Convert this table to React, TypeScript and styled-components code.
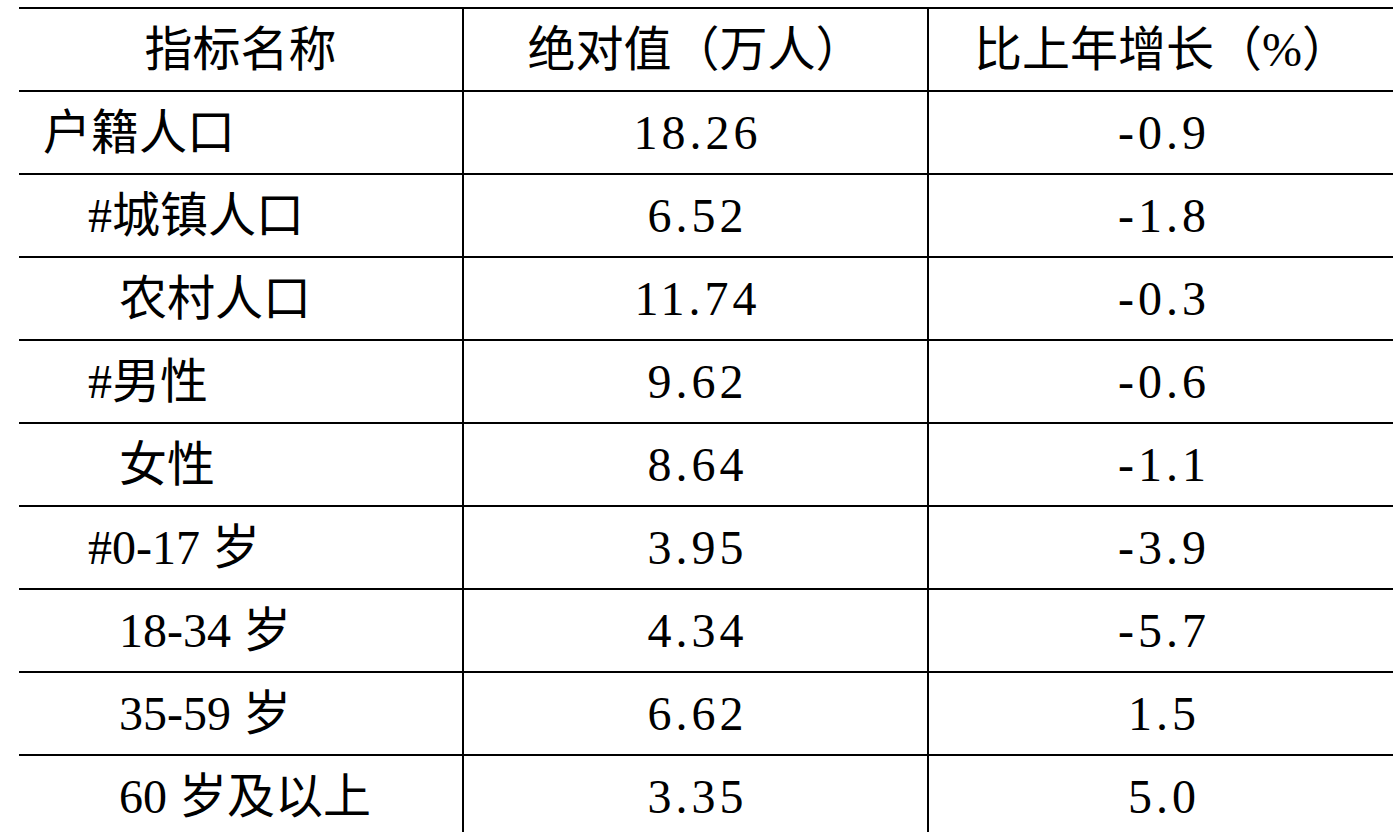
import React from "react";
import styled, { createGlobalStyle } from "styled-components";

const Global = createGlobalStyle`
  html, body {
    margin: 0;
    padding: 0;
    background: #ffffff;
    overflow: hidden;
  }
  body {
    color: #000;
  }
`;

const Page = styled.div`
  padding: 7px 0 0 19px;
  width: 1420px;
`;

const Table = styled.table`
  border-collapse: collapse;
  table-layout: fixed;
  width: 1376px;
`;

const Col = styled.col<{ $w: number }>`
  width: ${(p) => p.$w}px;
`;

const Row = styled.tr`
  height: 83px;
`;

const Cell = styled.td<{ $first?: boolean; $indent?: number; $center?: boolean }>`
  border-top: 2px solid #000;
  border-left: ${(p) => (p.$first ? "none" : "2px solid #000")};
  padding: 0 0 0 ${(p) => (p.$indent ?? 0)}px;
  text-align: ${(p) => (p.$center ? "center" : "left")};
  vertical-align: middle;
  white-space: nowrap;
  font-family: "Liberation Serif", "Noto Sans CJK SC", serif;
  font-size: 48px;
  font-weight: 400;
  line-height: 1;
`;

const HeadCell = styled(Cell).attrs({ as: "th" })``;

const Num = styled.span`
  letter-spacing: 4px;
  margin-right: -4px;
`;

type RowData = { name: string; indent: number; value: string; growth: string };

const rows: RowData[] = [
  { name: "户籍人口", indent: 24, value: "18.26", growth: "-0.9" },
  { name: "#城镇人口", indent: 69, value: "6.52", growth: "-1.8" },
  { name: "农村人口", indent: 100, value: "11.74", growth: "-0.3" },
  { name: "#男性", indent: 69, value: "9.62", growth: "-0.6" },
  { name: "女性", indent: 100, value: "8.64", growth: "-1.1" },
  { name: "#0-17 岁", indent: 69, value: "3.95", growth: "-3.9" },
  { name: "18-34 岁", indent: 100, value: "4.34", growth: "-5.7" },
  { name: "35-59 岁", indent: 100, value: "6.62", growth: "1.5" },
  { name: "60 岁及以上", indent: 100, value: "3.35", growth: "5.0" },
];

export default function App() {
  return (
    <>
      <Global />
      <Page>
        <Table>
          <colgroup>
            <Col $w={444} />
            <Col $w={465} />
            <Col $w={467} />
          </colgroup>
          <thead>
            <Row>
              <HeadCell $first $center>指标名称</HeadCell>
              <HeadCell $center>绝对值（万人）</HeadCell>
              <HeadCell $center>比上年增长（%）</HeadCell>
            </Row>
          </thead>
          <tbody>
            {rows.map((r) => (
              <Row key={r.name}>
                <Cell $first $indent={r.indent}>{r.name}</Cell>
                <Cell $center><Num>{r.value}</Num></Cell>
                <Cell $center><Num>{r.growth}</Num></Cell>
              </Row>
            ))}
          </tbody>
        </Table>
      </Page>
    </>
  );
}
